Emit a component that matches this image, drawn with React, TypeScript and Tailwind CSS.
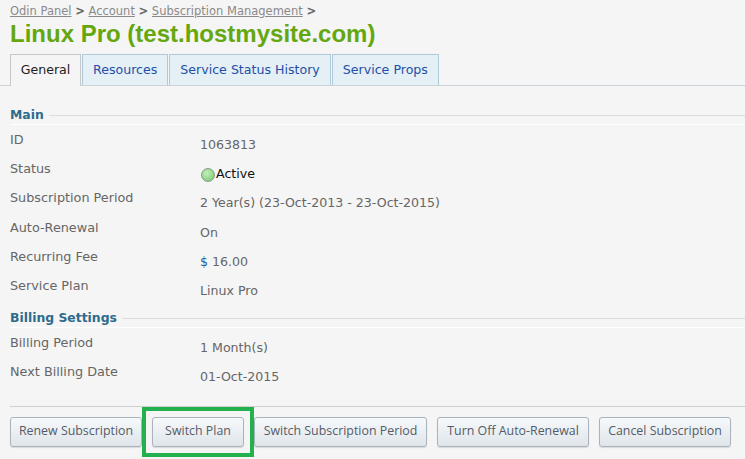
const SANS = "font-['DejaVu_Sans',sans-serif]";

type Row = { label: string; value: React.ReactNode };

const mainRows: Row[] = [
  { label: "ID", value: "1063813" },
  {
    label: "Status",
    value: (
      <span className="flex items-center text-[#111]">
        <span className="mr-px ml-px size-[14px] rounded-full border border-[#8a9a8a] bg-[radial-gradient(circle_at_40%_35%,#c4efbc,#6cc46a)]" />
        Active
      </span>
    ),
  },
  { label: "Subscription Period", value: "2 Year(s) (23-Oct-2013 - 23-Oct-2015)" },
  { label: "Auto-Renewal", value: "On" },
  {
    label: "Recurring Fee",
    value: (
      <>
        <span className="text-[#2a5a9a]">$</span> 16.00
      </>
    ),
  },
  { label: "Service Plan", value: "Linux Pro" },
];

const billingRows: Row[] = [
  { label: "Billing Period", value: "1 Month(s)" },
  { label: "Next Billing Date", value: "01-Oct-2015" },
];

function Section({ title, rows }: { title: string; rows: Row[] }) {
  return (
    <div>
      <div className="flex h-[16px] items-center">
        <span className="mr-[5px] text-[12.4px] font-bold text-[#2d6b8c]">{title}</span>
        <span className="h-px flex-1 bg-[#dcdcdc]" />
      </div>
      <div className="mt-px border-t border-white pt-[3px]">
        {rows.map((r) => (
          <div key={r.label} className="flex h-[29.2px] text-[#666]">
            <div className="w-[190px] pt-[2px] text-[12.8px]">{r.label}</div>
            <div className="pt-[8px] text-[12.6px]">{r.value}</div>
          </div>
        ))}
      </div>
    </div>
  );
}

function Btn({ children, width }: { children: string; width: string }) {
  return (
    <button
      type="button"
      className={`h-[30px] rounded-[3px] border border-[#a9b3bd] bg-gradient-to-b from-[#f6f9fc] to-[#dfe5ea] font-['Open_Sans',sans-serif] text-[12.4px] text-[#555b66] shadow-[0_1px_1px_rgba(0,0,0,0.12)] ${width}`}
    >
      {children}
    </button>
  );
}

export default function App() {
  const tabs = ["Resources", "Service Status History", "Service Props"];
  return (
    <div className={`h-[459px] w-[745px] overflow-hidden bg-[#f5f5f5] ${SANS}`}>
      {/* breadcrumb + title */}
      <div className="px-[10px] pt-[3px] text-[11.5px] leading-[16px] text-[#8a8a8a]">
        <span className="underline">Odin Panel</span> <b className="text-[#666]">&gt;</b>{" "}
        <span className="underline">Account</span> <b className="text-[#666]">&gt;</b>{" "}
        <span className="underline">Subscription Management</span> <b className="text-[#666]">&gt;</b>
      </div>
      <h1 className="px-[10px] font-['Liberation_Sans',sans-serif] text-[24px] leading-[30px] font-bold text-[#64a70f]">
        Linux Pro (test.hostmysite.com)
      </h1>

      {/* tabs */}
      <div className="mt-[5px] flex h-[32px] gap-px border-b border-[#c9d3d9] pl-[10px] text-[12.6px]">
        <div className="-mb-px flex w-[71px] items-center justify-center border border-b-0 border-[#c8c8c8] bg-[#f5f5f5] text-[#222]">
          General
        </div>
        {tabs.map((t) => (
          <div
            key={t}
            className="flex items-center border border-b-0 border-[#b0c9d8] bg-[#e4eff6] px-[10px] text-[#1f4fa8]"
          >
            {t}
          </div>
        ))}
      </div>

      <div className="mt-[21px] pl-[10px]">
        <Section title="Main" rows={mainRows} />
      </div>
      <div className="mt-[7px] pl-[10px]">
        <Section title="Billing Settings" rows={billingRows} />
      </div>

      {/* action bar */}
      <div className="mt-[16px] ml-[10px] flex gap-[10px] border-t border-[#cfcfcf] pt-[10px]">
        <Btn width="w-[132px]">Renew Subscription</Btn>
        <div className="relative">
          <div className="pointer-events-none absolute -inset-[10px] border-[4px] border-[#22b14c]" />
          <Btn width="w-[92px]">Switch Plan</Btn>
        </div>
        <Btn width="w-[173px]">Switch Subscription Period</Btn>
        <Btn width="w-[152px]">Turn Off Auto-Renewal</Btn>
        <Btn width="w-[132px]">Cancel Subscription</Btn>
      </div>
    </div>
  );
}
